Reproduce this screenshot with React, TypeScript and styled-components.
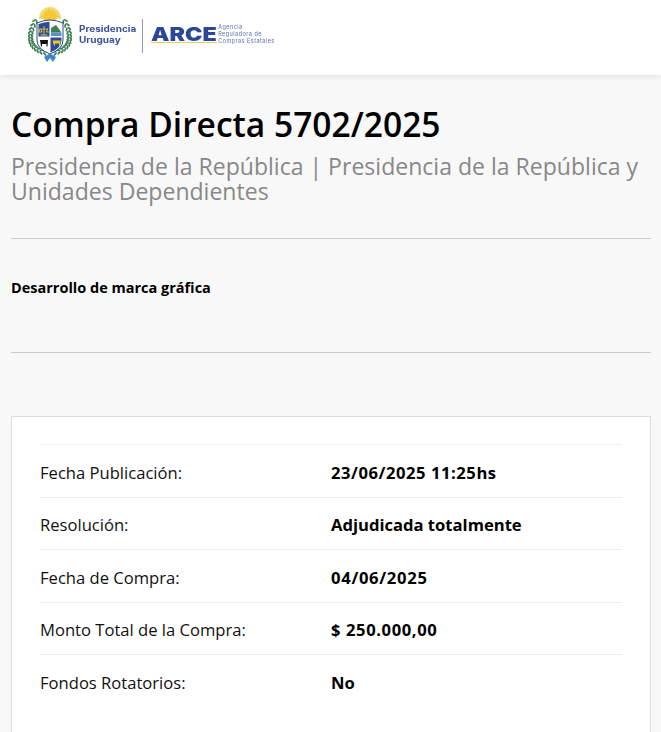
import React from "react";
import styled, { createGlobalStyle } from "styled-components";

const Global = createGlobalStyle`
  html, body { margin: 0; padding: 0; background: #f8f8f8; height: 100%; overflow: hidden; }
  body { font-family: "Open Sans", "Noto Sans", "Liberation Sans", sans-serif; color: #000; }
`;
const Header = styled.header`
  height: 75px; background: #fff; box-shadow: 0 1px 6px rgba(0,0,0,.1);
  display: flex; align-items: center; padding-left: 28px; box-sizing: border-box;
`;
const LogoBrand = styled.div`display: flex; align-items: center; height: 62px; margin-top: -4px; filter: blur(.35px);`;
const Pres = styled.div`
  margin: -2px 8px 0 7px; font-family: "Inter", sans-serif; font-weight: 700; font-size: 8.6px; line-height: 10.5px; color: #3a4f9b;
  transform: scaleX(1.16); transform-origin: left center; white-space: nowrap;
`;
const Divider = styled.div`width: 1px; height: 34px; background: #8b98c5; margin: 0 8px 0 6px;`;
const Arce = styled.div`
  font-family: "Inter", sans-serif; font-weight: 900; font-size: 19.4px; line-height: 15px; color: #2b4796;
  transform: scaleX(1.2); transform-origin: left center; margin-right: 9px; border-bottom: 1px solid #f0cf55; margin-top: -1px;
`;
const Agency = styled.div`
  margin-left: 3px; font-family: "Inter", sans-serif; font-size: 5.5px; line-height: 6.7px; letter-spacing: .47px; color: #5a6fae; margin-top: -2px; white-space: nowrap;
`;
const Main = styled.main`padding: 26px 10px 0 11px;`;
const Title = styled.h1`
  margin: 0 0 7px; font-size: 33.54px; line-height: 46px; font-weight: 600; color: #000; white-space: nowrap;
`;
const Subtitle = styled.h2`
  margin: 0; font-size: 23.05px; line-height: 25px; font-weight: 400; color: #888;
`;
const Rule = styled.hr`margin: 0; border: 0; border-top: 1px solid #ccc;`;
const Top = styled(Rule)`margin-top: 34px;`;
const Desc = styled.p`margin: 0; padding: 39px 0 55px; font-size: 14.5px; line-height: 19px; font-weight: 700;`;
const Card = styled.section`
  margin-top: 63px; background: #fff; border: 1px solid #ddd; padding: 27px 28px 30px; height: 400px; box-sizing: border-box;
`;
const Row = styled.div`
  display: grid; grid-template-columns: 291px 1fr; align-items: center; height: 52.5px; box-sizing: border-box;
  border-top: 1px solid #eee; font-size: 16.6px; padding-top: 3px;
`;
const Label = styled.span`color: #111;`;
const Value = styled.span<{ $spacing: number }>`font-weight: 700; color: #000; letter-spacing: ${p => p.$spacing}px;`;

const rows: [string, string, number][] = [
  ["Fecha Publicación:", "23/06/2025 11:25hs", 0.55],
  ["Resolución:", "Adjudicada totalmente", 0],
  ["Fecha de Compra:", "04/06/2025", 0.7],
  ["Monto Total de la Compra:", "$ 250.000,00", 0.6],
  ["Fondos Rotatorios:", "No", 0],
];

const leaves = Array.from({ length: 13 }).map((_, i) => {
  const t = i / 12;
  const p0 = [7, 17], p1 = [-6, 42], p2 = [18, 48];
  const u = 1 - t;
  const x = u * u * p0[0] + 2 * u * t * p1[0] + t * t * p2[0];
  const y = u * u * p0[1] + 2 * u * t * p1[1] + t * t * p2[1];
  const dx = 2 * u * (p1[0] - p0[0]) + 2 * t * (p2[0] - p1[0]);
  const dy = 2 * u * (p1[1] - p0[1]) + 2 * t * (p2[1] - p1[1]);
  return { x, y, a: (Math.atan2(dy, dx) * 180) / Math.PI };
});

const Crest = () => (
  <svg width="44" height="62" viewBox="0 0 44 62">
    {Array.from({ length: 17 }).map((_, i) => {
      const a = Math.PI * 1.0 + (i * Math.PI) / 16;
      return <line key={i} x1={22 + 5 * Math.cos(a)} y1={13 + 5 * Math.sin(a)} x2={22 + 11 * Math.cos(a)} y2={13 + 11 * Math.sin(a)} stroke="#f2c93a" strokeWidth="1.4" />;
    })}
    <circle cx="22" cy="12" r="6.5" fill="#f2c93a" />
    {[0, 1].map(side => (
      <g key={side} transform={side ? "translate(44 0) scale(-1 1)" : undefined}>
        {leaves.map((l, i) => (
          <g key={i} transform={`translate(${l.x} ${l.y}) rotate(${l.a})`}>
            <ellipse cx="0" cy="-1.7" rx="2.3" ry=".95" fill="#3f8055" transform="rotate(-32)" />
            <ellipse cx="0" cy="1.7" rx="2.3" ry=".95" fill="#3f8055" transform="rotate(32)" />
          </g>
        ))}
      </g>
    ))}
    <path d="M9 18Q22 12 35 18V35Q35 44 22 49Q9 44 9 35Z" fill="#fff" stroke="#2d4a96" strokeWidth="1" />
    <path d="M10.500 19Q16 17 21.500 16.800V31.500H10.500Z" fill="#2d4a96" />
    <path d="M23 23L28 20L33.500 27.500H23Z" fill="#3f8055" />
    <path d="M23 27.500H33.500V31H23Z" fill="#5d8ec4" />
    <path d="M22.500 32.500H33.500V35Q33.500 43 22.500 47.500Z" fill="#2d4a96" />
    <path d="M11.500 24H20M16 21V30M12.500 30H19.500M11.800 24L11 27H14L13 24M19.500 24L18.500 27H21" stroke="#eac52f" strokeWidth=".9" fill="none" />
    <path d="M12 35H20L19.500 41.500H18.500V39H14V41.500H13Z" fill="#111" />
    <path d="M24.500 35.500H32.500L32 40.500H31V38.500H27V40.500H26Z" fill="#f0c52c" />
    <path d="M16 52L22 48.500L28 52L25 57L22 53L19 57Z" fill="#3b84c8" />
  </svg>
);

export default function App() {
  return (
    <>
      <Global />
      <Header>
        <LogoBrand>
          <Crest />
          <Pres>Presidencia<br />Uruguay</Pres>
          <Divider />
          <Arce>ARCE</Arce>
          <Agency>Agencia<br />Reguladora de<br />Compras Estatales</Agency>
        </LogoBrand>
      </Header>
      <Main>
        <Title>Compra Directa 5702/2025</Title>
        <Subtitle>Presidencia de la República | Presidencia de la República y Unidades Dependientes</Subtitle>
        <Top />
        <Desc>Desarrollo de marca gráfica</Desc>
        <Rule />
        <Card>
          {rows.map(([l, v, s]) => (
            <Row key={l}><Label>{l}</Label><Value $spacing={s}>{v}</Value></Row>
          ))}
        </Card>
      </Main>
    </>
  );
}
